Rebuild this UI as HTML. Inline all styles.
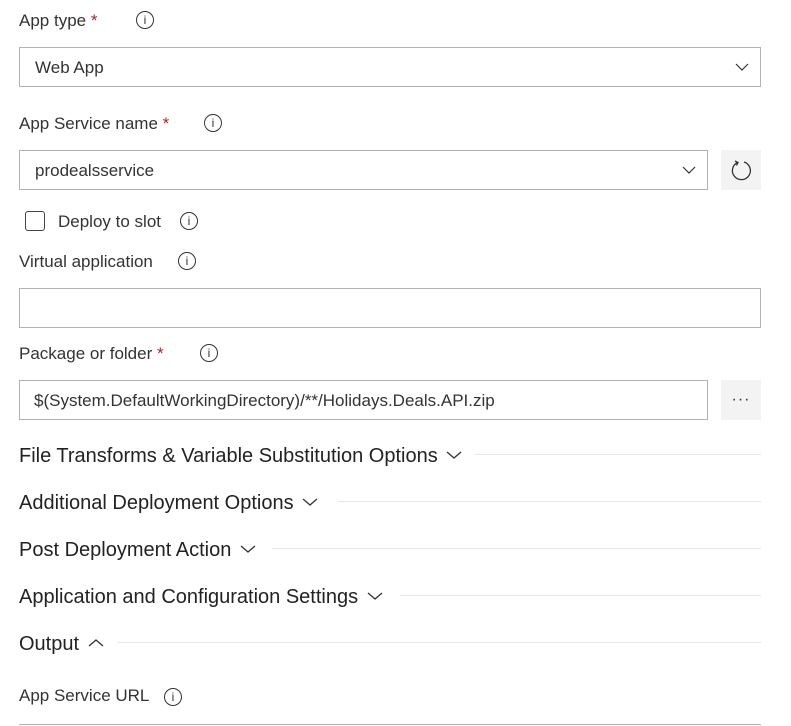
<!DOCTYPE html>
<html><head><meta charset="utf-8"><style>
body{margin:0;width:791px;height:726px;background:#fff;font-family:"Liberation Sans",sans-serif;color:#333;position:relative;overflow:hidden}
.a{position:absolute;white-space:nowrap}
.lbl{font-size:17px;line-height:20px;color:#333}
.req{color:#a4262c}
.info{position:absolute;width:18px;height:18px;border:1.3px solid #333;border-radius:50%;box-sizing:border-box;font-size:12px;line-height:16px;text-align:center;font-family:"Liberation Sans",sans-serif;color:#333}
.inp{position:absolute;border:1px solid #b3b3b3;box-sizing:border-box;background:#fff;font-size:17px;line-height:40px;padding-left:15px;color:#333}
.btn{position:absolute;background:#f3f3f3;width:40px;height:40px}
.sec{font-size:20px;line-height:24px;color:#222}
.line{position:absolute;height:1px;background:#e6e6e6}
.sec svg{vertical-align:2px;margin-left:3px}
</style></head><body>
<div class="a lbl" style="left:19px;top:11px">App type <span class="req">*</span></div>
<div class="info" style="left:136px;top:11px">i</div>
<div class="inp" style="left:19px;top:47px;width:742px;height:40px">Web App</div>
<svg class="a" style="left:735px;top:63px" width="14" height="8"><path d="M1 1 L7 7 L13 1" stroke="#333" stroke-width="1.2" fill="none"/></svg>

<div class="a lbl" style="left:19px;top:114px">App Service name <span class="req">*</span></div>
<div class="info" style="left:204px;top:114px">i</div>
<div class="inp" style="left:19px;top:150px;width:689px;height:40px">prodealsservice</div>
<svg class="a" style="left:682px;top:166px" width="14" height="8"><path d="M1 1 L7 7 L13 1" stroke="#333" stroke-width="1.2" fill="none"/></svg>
<div class="btn" style="left:721px;top:150px"><svg width="40" height="40"><path d="M16.5 12.5 A9 9 0 1 0 23 12" stroke="#333" stroke-width="1.3" fill="none"/><path d="M14 11 L17 12.5 L15.5 15.5" stroke="#333" stroke-width="1.3" fill="none"/></svg></div>

<div class="a" style="left:25px;top:211px;width:20px;height:20px;border:1.3px solid #444;border-radius:3px;box-sizing:border-box"></div>
<div class="a lbl" style="left:58px;top:212px">Deploy to slot</div>
<div class="info" style="left:180px;top:212px">i</div>

<div class="a lbl" style="left:19px;top:252px">Virtual application</div>
<div class="info" style="left:178px;top:252px">i</div>
<div class="inp" style="left:19px;top:288px;width:742px;height:40px"></div>

<div class="a lbl" style="left:19px;top:344px">Package or folder <span class="req">*</span></div>
<div class="info" style="left:200px;top:344px">i</div>
<div class="inp" style="left:19px;top:380px;width:689px;height:40px;padding-left:14px">$(System.DefaultWorkingDirectory)/**/Holidays.Deals.API.zip</div>
<div class="btn" style="left:721px;top:380px;font-size:16px;line-height:40px;text-align:center;letter-spacing:1px">···</div>

<div class="a sec" style="left:19px;top:444px">File Transforms &amp; Variable Substitution Options <svg width="16" height="10"><path d="M1 2 L8 8 L15 2" stroke="#333" stroke-width="1.3" fill="none"/></svg></div>
<div class="line" style="left:475px;width:286px;top:454px"></div>
<div class="a sec" style="left:19px;top:491px">Additional Deployment Options <svg width="16" height="10"><path d="M1 2 L8 8 L15 2" stroke="#333" stroke-width="1.3" fill="none"/></svg></div>
<div class="line" style="left:338px;width:423px;top:501px"></div>
<div class="a sec" style="left:19px;top:538px">Post Deployment Action <svg width="16" height="10"><path d="M1 2 L8 8 L15 2" stroke="#333" stroke-width="1.3" fill="none"/></svg></div>
<div class="line" style="left:272px;width:489px;top:548px"></div>
<div class="a sec" style="left:19px;top:585px">Application and Configuration Settings <svg width="16" height="10"><path d="M1 2 L8 8 L15 2" stroke="#333" stroke-width="1.3" fill="none"/></svg></div>
<div class="line" style="left:400px;width:361px;top:595px"></div>
<div class="a sec" style="left:19px;top:632px">Output <svg width="16" height="10"><path d="M1 8 L8 2 L15 8" stroke="#333" stroke-width="1.3" fill="none"/></svg></div>
<div class="line" style="left:118px;width:643px;top:642px"></div>

<div class="a lbl" style="left:19px;top:686px">App Service URL</div>
<div class="info" style="left:164px;top:688px">i</div>
<div class="a" style="left:19px;top:724px;width:742px;height:1px;background:#b3b3b3"></div>
</body></html>
